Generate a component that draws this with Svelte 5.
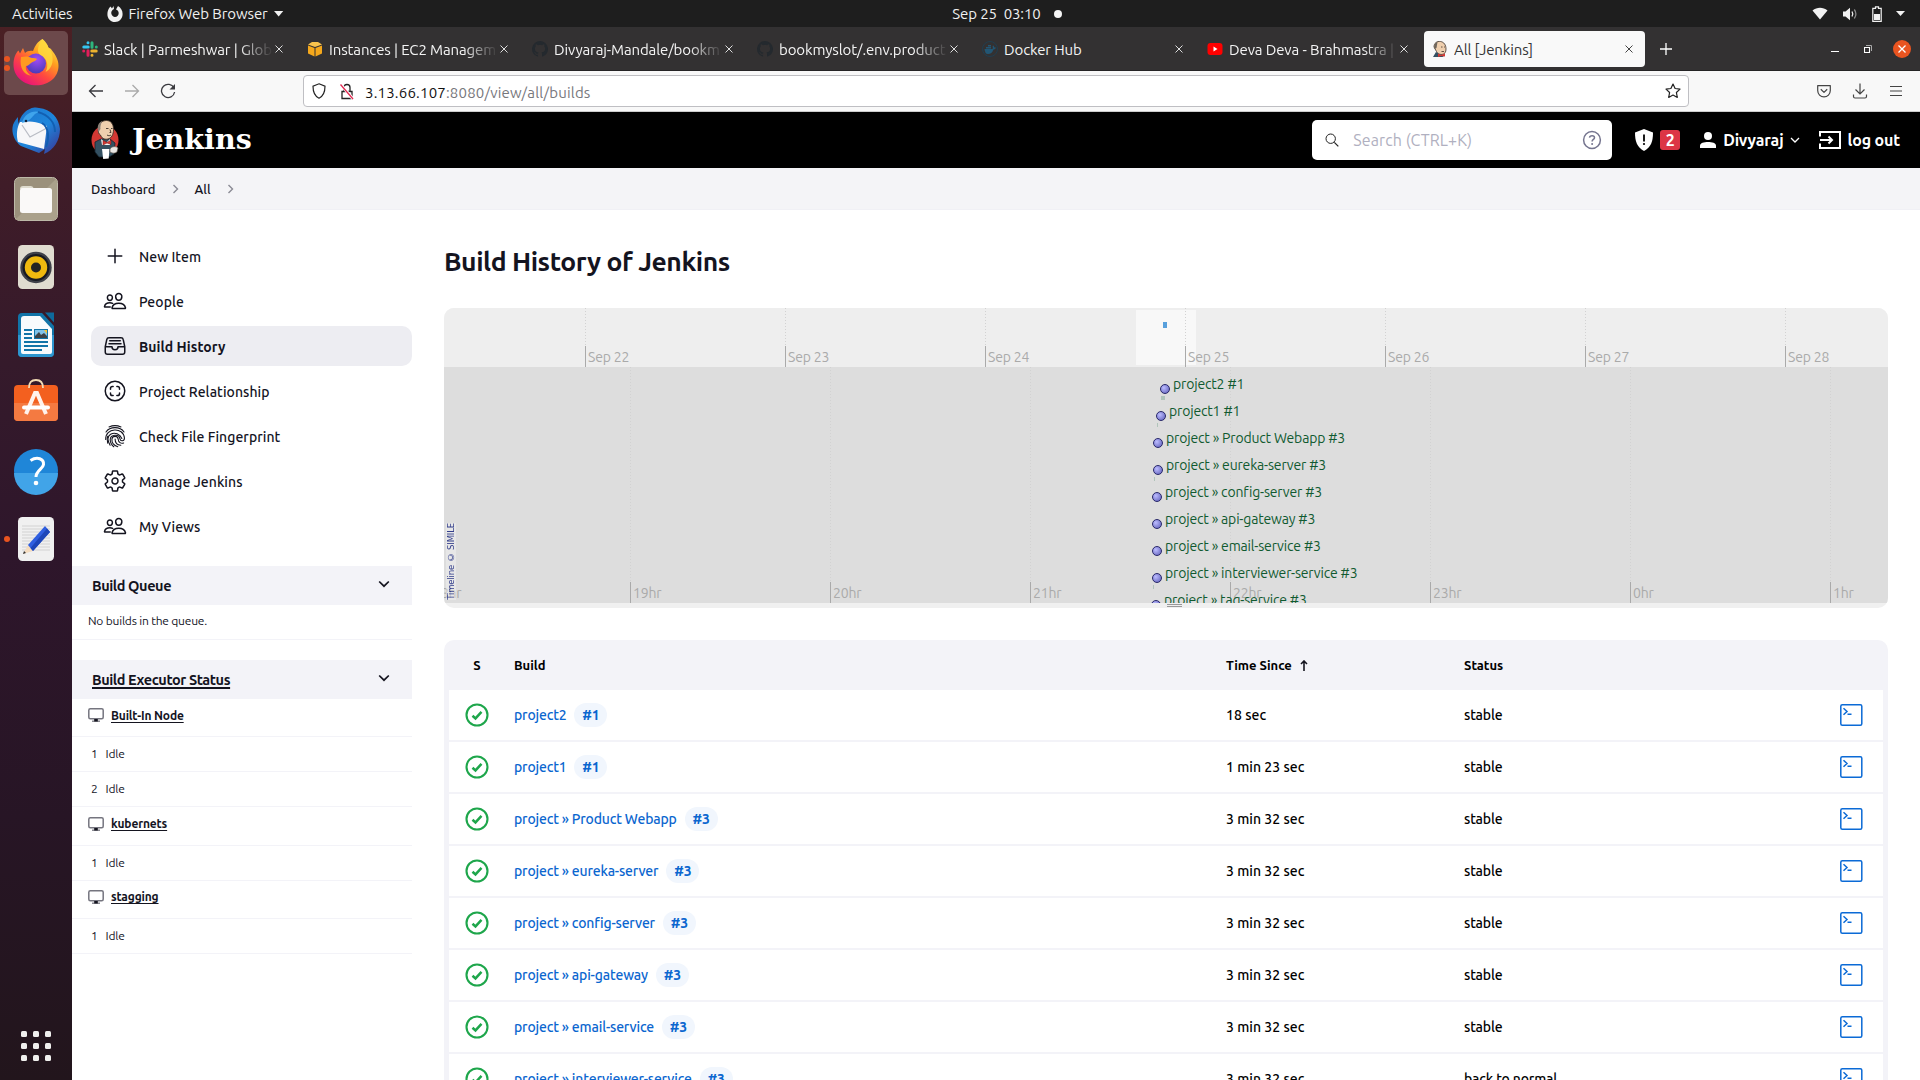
<script>
  const tabs = [
    { title: 'Slack | Parmeshwar | Glob', icon: 'slack' },
    { title: 'Instances | EC2 Managem', icon: 'ec2' },
    { title: 'Divyaraj-Mandale/bookm', icon: 'github' },
    { title: 'bookmyslot/.env.product', icon: 'github' },
    { title: 'Docker Hub', icon: 'docker', plain: true },
    { title: 'Deva Deva - Brahmastra |', icon: 'youtube' },
    { title: 'All [Jenkins]', icon: 'jenkins', active: true, plain: true },
  ];

  const tasks = [
    { label: 'New Item', icon: 'plus' },
    { label: 'People', icon: 'people' },
    { label: 'Build History', icon: 'tray', active: true },
    { label: 'Project Relationship', icon: 'scan' },
    { label: 'Check File Fingerprint', icon: 'finger' },
    { label: 'Manage Jenkins', icon: 'gear' },
    { label: 'My Views', icon: 'people' },
  ];

  const executors = [
    { name: 'Built-In Node', slots: [1, 2] },
    { name: 'kubernets', slots: [1] },
    { name: 'stagging', slots: [1] },
  ];

  const days = ['Sep 22', 'Sep 23', 'Sep 24', 'Sep 25', 'Sep 26', 'Sep 27', 'Sep 28'];
  const hours = ['18hr', '19hr', '20hr', '21hr', '22hr', '23hr', '0hr', '1hr'];

  const events = [
    { name: 'project2 #1', x: 716, tape: 4 },
    { name: 'project1 #1', x: 712, tape: 1 },
    { name: 'project » Product Webapp #3', x: 709, tape: 0 },
    { name: 'project » eureka-server #3', x: 709, tape: 1 },
    { name: 'project » config-server #3', x: 708, tape: 0 },
    { name: 'project » api-gateway #3', x: 708, tape: 0 },
    { name: 'project » email-service #3', x: 708, tape: 0 },
    { name: 'project » interviewer-service #3', x: 708, tape: 1 },
    { name: 'project » tag-service #3', x: 707, tape: 0 },
  ];

  const builds = [
    { name: 'project2', no: '#1', time: '18 sec', status: 'stable' },
    { name: 'project1', no: '#1', time: '1 min 23 sec', status: 'stable' },
    { name: 'project » Product Webapp', no: '#3', time: '3 min 32 sec', status: 'stable' },
    { name: 'project » eureka-server', no: '#3', time: '3 min 32 sec', status: 'stable' },
    { name: 'project » config-server', no: '#3', time: '3 min 32 sec', status: 'stable' },
    { name: 'project » api-gateway', no: '#3', time: '3 min 32 sec', status: 'stable' },
    { name: 'project » email-service', no: '#3', time: '3 min 32 sec', status: 'stable' },
    { name: 'project » interviewer-service', no: '#3', time: '3 min 32 sec', status: 'back to normal' },
  ];
</script>

{#snippet butler()}
  <ellipse cx="14" cy="20" rx="13.5" ry="14.5" fill="#d33833" />
  <path d="M4 22l6-3h9l5 4-1 11-5 3H8l-4-5z" fill="#335061" stroke="#16242d" stroke-width=".8" />
  <path d="M10 19l5 4 4-4v6h-8z" fill="#f4f4f4" />
  <path d="M7.500 8c0-5 4-7.500 8-7.500s7 3 7 9c0 5-2 8.500-5.500 9.500-4 .8-6.500-1-7.500-4-2-1-2.500-3-2-7z" fill="#efcfae" stroke="#3d3129" stroke-width=".9" />
  <path d="M7.500 12c-2-5 0-9.500 3.500-11-1 3-2 6-1.500 8z" fill="#8c8177" />
  <path d="M15 8.500h2.500M20 8.500h1.500M16 15c1.500 1 3 .8 4 0M19 9.500l1 3h-1.500" stroke="#3d3129" stroke-width=".9" fill="none" />
  <path d="M12 20.500l4 2 4-2.500v4.500l-4-1.500-4 2z" fill="#d33833" stroke="#7d1513" stroke-width=".5" />
  <path d="M11 29h7.500l-.8 9.500-5.500.5z" fill="#fff" />
  <path d="M19 29c2-3 6-3 8-1l-1 4c-3 2-5 1-7 0z" fill="#e9e6e2" stroke="#54483d" stroke-width=".6" />
{/snippet}

<div class="desktop">
  <header class="topbar">
    <div class="top-left">
      <span>Activities</span>
      <span class="app-menu">
        <svg width="16" height="18" viewBox="0 0 16 18"><path d="M3.500 1.500L5 3.500 6.500 1 7 4c-2 1-3 2.500-2.700 4.500C4.800 10.800 6.300 12 8 12c2.200 0 3.800-1.700 3.700-4C11.600 6.300 10.500 5 9 4.500L11 1c3 2 4.600 4.500 4.600 8 0 4.700-3.300 8-7.600 8-4.400 0-7.600-3.300-7.600-7.800C.4 6 1.500 3.500 3.500 1.500z" fill="#f2f2f2" /></svg>
        <span>Firefox Web Browser</span>
        <i class="caret"></i>
      </span>
    </div>
    <div class="clock"><span>Sep 25&nbsp; 03:10</span><i class="notice"></i></div>
    <div class="tray">
      <svg width="16" height="14" viewBox="0 0 16 14"><path d="M.5 3.500C5-.3 11-.3 15.500 3.500L8 12.500z" fill="#f2f2f2" /></svg>
      <svg width="16" height="14" viewBox="0 0 16 14"><path d="M1 4.500h2.500L8 .8v12.400L3.500 9.500H1z" fill="#f2f2f2" /><path d="M10 4.500q1.600 2.500 0 5" stroke="#f2f2f2" stroke-width="1.300" fill="none" /><path d="M12.300 2.500q3.200 4.500 0 9" stroke="#888" stroke-width="1.300" fill="none" /></svg>
      <svg width="10" height="16" viewBox="0 0 10 16"><path d="M3.500.8h3v1.500h2.700v13H.8v-13h2.700z" fill="none" stroke="#f2f2f2" stroke-width="1.200" /><path d="M2 8h6v6H2z" fill="#f2f2f2" /></svg>
      <i class="caret"></i>
    </div>
  </header>

  <div class="below">
    <aside class="dock">
      <div class="slot current">
        <svg width="48" height="48" viewBox="0 0 48 48">
          <defs>
            <linearGradient id="ff" x1="1" y1="0" x2=".3" y2="1"><stop offset=".1" stop-color="#fff14f" /><stop offset=".4" stop-color="#ffa01f" /><stop offset=".68" stop-color="#ff4a3f" /><stop offset="1" stop-color="#e8127a" /></linearGradient>
            <radialGradient id="fp" cx=".55" cy=".3" r=".7"><stop offset="0" stop-color="#a04bf5" /><stop offset="1" stop-color="#4b3bb8" /></radialGradient>
          </defs>
          <path d="M30.500 0c3 2.500 5.500 5.500 6 9 1.500-.3 2.500.5 3.500 2.500 3 3.500 6.500 9 6.500 15.500 0 11-9.500 19.300-22 19.300S1.500 37.800 1.500 25.500c0-6 2-11.500 5-14l1.500 3 3-5.500 2 5c2-2 5-2.500 8-2 3-7 4.500-9 9.500-12z" fill="url(#ff)" />
          <circle cx="24" cy="24.500" r="10" fill="url(#fp)" />
          <path d="M9 18c5-1 8-.5 11 1 2 0 4 0 5 1-1 2-4 2.500-6 4-1.500 1-3 3-5 3-1 4 2 8 6 10-8-1-13-8-11-19z" fill="#ff9a20" />
          <path d="M30.500 0c3 5 9 10 10 18 1 8-3 13-7 15 4-7 1-14-5-17-4-2-3-10 2-16z" fill="#ffd83d" opacity=".85" />
        </svg>
        <i class="dot upper"></i><i class="dot lower"></i>
      </div>
      <div class="slot">
        <svg width="48" height="48" viewBox="0 0 48 48">
          <defs><linearGradient id="tb" x1="0" y1="0" x2="1" y2="1"><stop offset="0" stop-color="#1d73c9" /><stop offset=".55" stop-color="#1e86dc" /><stop offset="1" stop-color="#3c3190" /></linearGradient></defs>
          <path d="M12 6C18 0 24 0 27 1c12 1 20 10 21 21 0 11-6 21-16 25l1-5-6 4-18-7C2 34-1 25 1 18c1-3 3-6 5-8 0 3 0 5 1 7 0-4 2-8 5-11z" fill="url(#tb)" />
          <path d="M8 15c7 0 13-2 24 3l3 1-3 23-26-7C4 28 5 20 8 15z" fill="#f7f7f9" />
          <path d="M10 18l8 12 17-9" fill="none" stroke="#b9bcc4" stroke-width="1.200" />
          <path d="M10 16c2-9 10-13 18-11-8 1-7 9-18 11z" fill="#3fa4ec" />
          <path d="M26 5c10 3 17 10 17 20M30 16c6 4 8 13 4 24" fill="none" stroke="#125fb2" stroke-width="2" />
          <circle cx="14" cy="14" r="1.300" fill="#12233e" />
        </svg>
      </div>
      <div class="slot">
        <svg width="48" height="48" viewBox="0 0 48 48">
          <rect x="2.500" y="2.500" width="43" height="43" rx="5" fill="#9b917c" stroke="#bdb9a8" />
          <path d="M3 45L44 4q1 1 1 4v33q0 4-4 4z" fill="#aaa18b" />
          <path d="M8 14q0-3 3-3h8q2 0 3 3z" fill="#dfdccf" />
          <rect x="8" y="13" width="32" height="25" rx="2.500" fill="#faf9f8" />
        </svg>
      </div>
      <div class="slot">
        <svg width="48" height="48" viewBox="0 0 48 48">
          <rect x="6" y="2" width="36" height="44" rx="4.500" fill="#e0dcd0" />
          <circle cx="24" cy="24.500" r="15.700" fill="#3f4149" /><circle cx="24" cy="24.500" r="13.500" fill="#181a22" />
          <circle cx="24" cy="24.500" r="11.200" fill="#efb90f" /><circle cx="24" cy="24.500" r="5" fill="#242424" />
        </svg>
      </div>
      <div class="slot">
        <svg width="48" height="48" viewBox="0 0 48 48">
          <path d="M10 2h20l12 13v27q0 4-4 4H10q-4 0-4-4V6q0-4 4-4z" fill="#1174a8" />
          <path d="M6 24h36v18q0 4-4 4H10q-4 0-4-4z" fill="#2d96cf" />
          <path d="M12 5h16l12 13v23q0 2-2 2H11q-2 0-2-2V8q0-3 3-3z" fill="#f8fbfd" />
          <path d="M33 1.500h9v10z" fill="#0e6a9c" />
          <path d="M12 19h8M12 23h8M12 27h8M12 31h24M12 35h24M12 39h18" stroke="#1174a8" stroke-width="1.800" />
          <rect x="22" y="18" width="14" height="10" fill="#1174a8" /><rect x="23" y="19" width="12" height="8" fill="#80c3ea" />
          <path d="M23 27v-2l4-4 2 3 3-2 3 3v2z" fill="#3c4247" /><path d="M32 19h3v4z" fill="#f3c33b" />
        </svg>
      </div>
      <div class="slot">
        <svg width="48" height="48" viewBox="0 1 48 48">
          <rect x="2" y="7" width="44" height="36" rx="4" fill="#f3601f" />
          <path d="M2 25h44v14q0 4-4 4H6q-4 0-4-4z" fill="#f47a41" />
          <path d="M17 10q0-8 7-8t7 8" stroke="#f3dcb5" stroke-width="1.800" fill="none" />
          <path d="M14 36l9-21h2l9 21" fill="none" stroke="#fff3ec" stroke-width="4" /><path d="M12 29.500h24" stroke="#fff" stroke-width="4" stroke-linecap="round" />
        </svg>
      </div>
      <div class="slot">
        <svg width="48" height="48" viewBox="0 0 48 48">
          <circle cx="24" cy="24" r="22" fill="#1f86d8" /><path d="M2 26h44a22 22 0 0 1-44 0z" fill="#41a4e8" />
          <path d="M18.500 13.500c7-4.500 13.500-1.500 13 4-.5 4.500-7.500 6-7.500 12.500" fill="none" stroke="#fff" stroke-width="3" /><circle cx="24" cy="36" r="2.300" fill="#fff" />
        </svg>
      </div>
      <div class="slot">
        <svg width="48" height="48" viewBox="0 0 48 48">
          <rect x="6" y="2" width="36" height="44" rx="4.500" fill="#f0f0f0" />
          <path d="M10 11h28M10 14h28M10 17h28M10 20h28M10 23h28M10 26h28M10 29h28M10 32h28M10 35h28" stroke="#d2d2d2" />
          <path d="M16 30l5 6-10 3z" fill="#f4dcc0" /><path d="M11 39l1-3 2 2z" fill="#333" />
          <path d="M33 11l5 6-17 19-5-6z" fill="#2f5fe0" /><path d="M35 13.500l3 3.500-17 19-2.500-3z" fill="#1d46b8" />
        </svg>
        <i class="dot"></i>
      </div>
      <div class="apps">{#each Array(9) as _}<i></i>{/each}</div>
    </aside>

    <div class="browser">
      <div class="tabstrip">
        {#each tabs as tab}
          <div class="tab" class:active={tab.active}>
            <svg width="16" height="16" viewBox="0 0 16 16">
              {#if tab.icon === 'slack'}
                <g stroke-width="3" stroke-linecap="round" fill="none">
                  <path d="M1.800 6h4.400M6 1.700v0" stroke="#36c5f0" /><path d="M10 1.800v4.400M14.300 6v0" stroke="#2eb67d" />
                  <path d="M9.800 10h4.400M10 14.300v0" stroke="#ecb22e" /><path d="M6 9.800v4.400M1.700 10v0" stroke="#e01e5a" />
                </g>
              {:else if tab.icon === 'ec2'}
                <path d="M1 3.500L5 1h6l4 2.500L8 6z" fill="#f9c34d" /><path d="M1 4.500L7.500 7v8.500L1 12.500zM15 4.500L8.500 7v8.500l6.500-3z" fill="#f5a81c" />
              {:else if tab.icon === 'github'}
                <path d="M8 0a8 8 0 0 0-2.530 15.590c.4.070.55-.17.55-.38v-1.490c-2.230.49-2.700-.95-2.700-.95-.36-.92-.89-1.170-.89-1.170-.73-.5.060-.49.060-.49.800.060 1.230.83 1.230.83.72 1.230 1.870.87 2.330.67.070-.52.280-.87.510-1.070-1.780-.2-3.640-.89-3.640-3.950 0-.87.310-1.590.82-2.150-.08-.2-.36-1.020.08-2.120 0 0 .67-.21 2.200.82a7.700 7.700 0 0 1 4 0c1.530-1.040 2.200-.82 2.200-.82.44 1.100.16 1.920.08 2.120.51.560.82 1.270.82 2.150 0 3.070-1.870 3.750-3.650 3.950.29.250.54.730.54 1.480v2.190c0 .21.150.46.550.38A8 8 0 0 0 8 0z" fill="#24292e" />
              {:else if tab.icon === 'docker'}
                <circle cx="8" cy="8" r="7.500" fill="none" stroke="#203e50" /><path d="M2.500 8h8c.5-1 .4-2 0-3l1-.5 1 2h1.500c-.5 1.500-1.500 2-2.500 2-1 3-3 4.500-5.500 4.500S3 11 2.500 8zM4 6h5v1.500H4zM6 4h3v1.500H6z" fill="#225674" />
              {:else if tab.icon === 'youtube'}
                <rect x=".5" y="2" width="15" height="12" rx="3" fill="#f00" /><path d="M6.500 5.500v5l4-2.500z" fill="#fff" />
              {:else}
                <path d="M2 6c0-4 3-6 6.500-5.500S14 4 14 8c0 3-1 5-4 5.500-3 0-5-1-5.500-3z" fill="#efcfae" stroke="#3d3129" stroke-width=".8" /><path d="M2.500 8C1.500 4 3 1.500 5.500 1L4.500 7z" fill="#6f665c" /><path d="M9 6h1.500M12 6h1M9.500 10.500h2.500" stroke="#3d3129" stroke-width=".8" /><path d="M1 16l3-5 5 3 3 2z" fill="#335061" /><path d="M6 12.500l3 1.500 4-1.500v3l-4-.5-3 1z" fill="#d33833" />
              {/if}
            </svg>
            <span class="tab-title" class:plain={tab.plain}>{tab.title}</span>
            <svg class="close" width="8" height="8" viewBox="0 0 8 8"><path d="M.5.5l7 7M7.500.5l-7 7" stroke="currentColor" /></svg>
          </div>
        {/each}
        <svg class="newtab" width="12" height="12" viewBox="0 0 12 12"><path d="M6 0v12M0 6h12" stroke="#fff" stroke-width="1.300" /></svg>
        <div class="winctl">
          <svg width="8" height="8" viewBox="0 0 8 8"><path d="M0 6.500h8" stroke="#fff" /></svg>
          <svg width="8" height="8" viewBox="0 0 8 8"><path d="M.5 2.500h5v5h-5z" stroke="#fff" fill="none" stroke-width="1.100" /><path d="M2 .5h5.500V6" stroke="#aaa" fill="none" /></svg>
          <svg width="18" height="18" viewBox="0 0 18 18"><circle cx="9" cy="9" r="9" fill="#e95420" /><path d="M5.500 5.500l7 7M12.500 5.500l-7 7" stroke="#fff" stroke-width="1.300" /></svg>
        </div>
      </div>

      <div class="toolbar">
        <div class="nav">
          <svg width="16" height="16" viewBox="0 0 16 16"><path d="M15 8H1.500M7.500 2L1.500 8l6 6" fill="none" stroke="#3a3a3f" stroke-width="1.300" /></svg>
          <svg width="16" height="16" viewBox="0 0 16 16"><path d="M1 8h13.500M8.500 2l6 6-6 6" fill="none" stroke="#aaa" stroke-width="1.300" /></svg>
          <svg width="16" height="16" viewBox="0 0 16 16"><path d="M14 5A6.600 6.600 0 1 0 14.600 9" fill="none" stroke="#3a3a3f" stroke-width="1.300" /><path d="M15 1v5.500H9.500z" fill="#3a3a3f" /></svg>
        </div>
        <div class="urlbar">
          <svg width="14" height="16" viewBox="0 0 14 16"><path d="M7 .8l6 2.400c0 6-1.500 9.800-6 12C2.500 13 1 9.200 1 3.200z" fill="none" stroke="#222" stroke-width="1.200" /></svg>
          <svg class="lock" width="14" height="17" viewBox="0 0 14 17"><path d="M2 8.500h10v7H2zM4 8V4.500a3 3 0 0 1 6 0V8" fill="none" stroke="#222" stroke-width="1.300" /><path d="M.5 1L13 16" stroke="#fff" stroke-width="3" /><path d="M.5 1.500L13 16" stroke="#e22850" stroke-width="1.300" /></svg>
          <span class="url"><b>3.13.66.107</b>:8080/view/all/builds</span>
          <svg class="star" width="16" height="16" viewBox="0 0 16 16"><path d="M8 1l2.100 4.500 4.900.6-3.600 3.400.9 4.900L8 12l-4.300 2.400.9-4.900L1 6.100l4.900-.6z" fill="none" stroke="#222" stroke-width="1.200" stroke-linejoin="round" /></svg>
        </div>
        <div class="tools">
          <svg width="16" height="16" viewBox="0 0 16 16"><path d="M1.700 2.600h12.600v5a6.300 6.300 0 0 1-12.600 0zM4.800 6.300L8 9.400l3.200-3.100" fill="none" stroke="#444" stroke-width="1.200" stroke-linejoin="round" /></svg>
          <svg width="16" height="16" viewBox="0 0 16 16"><path d="M8 .5v10M3.500 6.500L8 11l4.500-4.500M1.500 11.500v2q0 1.500 1.500 1.500h10q1.500 0 1.500-1.500v-2" fill="none" stroke="#444" stroke-width="1.200" /></svg>
          <svg width="16" height="16" viewBox="0 0 16 16"><path d="M2 3.500h12M2 8h12M2 12.500h12" stroke="#444" stroke-width="1.200" /></svg>
        </div>
      </div>

      <div class="jenkins-head">
        <svg class="mascot" width="28" height="40" viewBox="0 0 28 40">{@render butler()}</svg>
        <span class="brand">Jenkins</span>
        <div class="search">
          <svg width="16" height="16" viewBox="0 0 16 16"><circle cx="6.700" cy="6.700" r="4.700" fill="none" stroke="#222" stroke-width="1" /><path d="M10.300 10.300l4 4" stroke="#222" stroke-width="1.200" /></svg>
          <span>Search (CTRL+K)</span>
          <svg class="help" width="20" height="20" viewBox="0 0 20 20"><circle cx="10" cy="10" r="8.400" fill="none" stroke="#75758f" stroke-width="1.500" /><path d="M7.500 7.700c.3-2.700 5-2.700 5 0 0 1.700-2.400 1.800-2.400 3.800" fill="none" stroke="#75758f" stroke-width="1.500" /><circle cx="10.100" cy="14" r="1" fill="#75758f" /></svg>
        </div>
        <svg class="shield" width="18" height="22" viewBox="0 0 18 22"><path d="M9 0l9 3.500c0 9-2 14.500-9 18.500C2 18 0 12.500 0 3.500z" fill="#fff" /><path d="M9 5.500v7" stroke="#000" stroke-width="1.800" /><circle cx="9" cy="15" r="1.100" /></svg>
        <span class="alerts">2</span>
        <svg class="user" width="16" height="16" viewBox="0 0 16 16"><circle cx="8" cy="4" r="4" fill="#fff" /><path d="M0 16v-2.500C0 11 4 10 8 10s8 1 8 3.500V16z" fill="#fff" /></svg>
        <span class="who">Divyaraj</span>
        <svg class="down" width="10" height="7" viewBox="0 0 10 7"><path d="M1 1l4 4 4-4" fill="none" stroke="#fff" stroke-width="1.300" /></svg>
        <svg class="exit" width="22" height="18" viewBox="0 0 22 18"><path d="M1 5.500V1h20v16H1v-4.500M1 9h12M9.500 5.500L13 9l-3.500 3.500" fill="none" stroke="#fff" stroke-width="2" /></svg>
        <span class="who">log out</span>
      </div>

      <nav class="crumbs">
        <span>Dashboard</span>
        <svg width="7" height="10" viewBox="0 0 7 10"><path d="M1.500 1l4 4-4 4" fill="none" stroke="#8a8a95" stroke-width="1.400" /></svg>
        <span>All</span>
        <svg width="7" height="10" viewBox="0 0 7 10"><path d="M1.500 1l4 4-4 4" fill="none" stroke="#8a8a95" stroke-width="1.400" /></svg>
      </nav>

      <div class="page">
        <aside class="side">
          <div class="tasks">
            {#each tasks as task}
              <div class="task" class:active={task.active}>
                <svg width="24" height="24" viewBox="0 0 512 512">
                  {#if task.icon === 'plus'}
                    <path d="M256 112v288M400 256H112" />
                  {:else if task.icon === 'people'}
                    <path d="M402 168c-2.930 40.670-33.100 72-66 72s-63.120-31.320-66-72c-3-42.310 26.370-72 66-72s69 30.460 66 72zM336 304c-65.170 0-127.840 32.370-143.540 95.410-2.080 8.340 3.150 16.590 11.720 16.590h263.650c8.570 0 13.770-8.250 11.720-16.590C463.850 335.360 401.180 304 336 304zM200 185.940c-2.340 32.480-26.720 58.060-53 58.060s-50.700-25.570-53-58.060C91.610 152.150 115.340 128 147 128s55.390 24.770 53 57.940zM206 306c-18.050-8.270-37.930-11.450-59-11.450-52 0-102.100 25.850-114.650 76.200-1.650 6.660 2.530 13.250 9.370 13.250H154" />
                  {:else if task.icon === 'tray'}
                    <path d="M384 80H128c-26 0-43 14-48 40L48 272v112a48 48 0 0 0 48 48h320a48 48 0 0 0 48-48V272l-32-152c-5-27-23-40-48-40zM48 272h144M320 272h144M192 272a64 64 0 0 0 128 0M144 144h224M128 208h256" />
                  {:else if task.icon === 'scan'}
                    <circle cx="256" cy="256" r="208" /><path d="M296 352h16a40 40 0 0 0 40-40v-16M352 216v-16a40 40 0 0 0-40-40h-16M216 160h-16a40 40 0 0 0-40 40v16M160 296v16a40 40 0 0 0 40 40h16" />
                  {:else if task.icon === 'finger'}
                    <g class="ridges">
                      <path d="M128 62c84-36 172-36 256 0" />
                      <path d="M64 170c84-124 300-124 384 0" />
                      <path d="M58 330c-16-250 380-280 400-30 2 70-84 80-96 16-14-110-200-100-208 10-4 60 30 120 76 160" />
                      <path d="M100 410c-14-50-18-100 0-150" />
                      <path d="M152 452c-50-90-64-190 10-234 90-50 200-10 240 90" />
                      <path d="M316 484c-90-30-130-100-126-160 6-80 126-80 134 0 6 70 60 100 116 82" />
                      <path d="M258 320c0 80 50 130 122 134" />
                    </g>
                  {:else}
                    <path d="M262.290 192.310a64 64 0 1 0 57.400 57.400 64.130 64.130 0 0 0-57.400-57.400zM416.390 256a154.340 154.340 0 0 1-1.530 20.790l45.210 35.460a10.810 10.810 0 0 1 2.450 13.750l-42.770 74a10.810 10.810 0 0 1-13.140 4.590l-44.900-18.080a16.110 16.110 0 0 0-15.170 1.750A164.480 164.480 0 0 1 325 400.800a15.940 15.940 0 0 0-8.820 12.140l-6.730 47.890a11.080 11.080 0 0 1-10.680 9.170h-85.540a11.110 11.110 0 0 1-10.690-8.870l-6.720-47.820a16.070 16.070 0 0 0-9-12.220 155.300 155.300 0 0 1-21.460-12.570 16 16 0 0 0-15.110-1.710l-44.890 18.070a10.810 10.810 0 0 1-13.140-4.580l-42.770-74a10.800 10.800 0 0 1 2.450-13.750l38.210-30a16.050 16.050 0 0 0 6-14.080c-.36-4.170-.58-8.330-.58-12.500s.21-8.270.58-12.350a16 16 0 0 0-6.070-13.940l-38.190-30A10.810 10.810 0 0 1 49.480 186l42.770-74a10.810 10.810 0 0 1 13.140-4.590l44.900 18.080a16.110 16.110 0 0 0 15.170-1.750A164.480 164.480 0 0 1 187 111.200a15.940 15.940 0 0 0 8.820-12.140l6.730-47.890A11.080 11.080 0 0 1 213.230 42h85.540a11.110 11.110 0 0 1 10.690 8.870l6.720 47.820a16.070 16.070 0 0 0 9 12.220 155.300 155.300 0 0 1 21.460 12.570 16 16 0 0 0 15.110 1.710l44.890-18.070a10.810 10.810 0 0 1 13.140 4.580l42.770 74a10.800 10.800 0 0 1-2.450 13.750l-38.210 30a16.050 16.050 0 0 0-6.050 14.080c.33 4.140.55 8.300.55 12.470z" />
                  {/if}
                </svg>
                <span>{task.label}</span>
              </div>
            {/each}
          </div>

          <div class="pane-head"><span>Build Queue</span><svg width="12" height="8" viewBox="0 0 12 8"><path d="M1.200 1.500L6 6.200l4.800-4.700" fill="none" stroke="#14141f" stroke-width="1.700" /></svg></div>
          <div class="queue">No builds in the queue.</div>
          <div class="pane-head"><span class="linked">Build Executor Status</span><svg width="12" height="8" viewBox="0 0 12 8"><path d="M1.200 1.500L6 6.200l4.800-4.700" fill="none" stroke="#14141f" stroke-width="1.700" /></svg></div>
          {#each executors as node}
            <div class="node">
              <svg width="16" height="14" viewBox="0 0 16 14"><rect x=".8" y=".8" width="14.400" height="10" rx="1.500" fill="none" stroke="#75757f" stroke-width="1.500" /><path d="M4 13.200h8" stroke="#75757f" stroke-width="1.300" /><path d="M6.200 11h3.600v2.500H6.200z" fill="#14141f" /></svg>
              <span>{node.name}</span>
            </div>
            {#each node.slots as slot}
              <div class="idle"><span>{slot}</span><span>Idle</span></div>
            {/each}
          {/each}
        </aside>

        <main>
          <h1>Build History of Jenkins</h1>

          <div class="timeline">
            <div class="band daily">
              <div class="window"></div>
              {#each days as day}<div class="tick"><span>{day}</span></div>{/each}
              <div class="mark"></div>
            </div>
            <div class="band hourly">
              {#each hours as hour}<div class="tick"><span>{hour}</span></div>{/each}
              {#each events as ev, i}
                <div class="event" style:left="{ev.x}px" style:top="{i * 27 + 6}px">
                  <i class="ball"></i><span>{ev.name}</span>
                  {#if ev.tape}<i class="tape" style:width="{ev.tape}px"></i>{/if}
                </div>
              {/each}
              <span class="credit">Timeline © SIMILE</span>
            </div>
            <div class="grip"><i></i><i></i></div>
          </div>

          <div class="table">
            <div class="row head">
              <span class="s">S</span><span>Build</span><span>Time Since <svg width="8" height="11" viewBox="0 0 8 11"><path d="M4 11V1M1 4l3-3 3 3" fill="none" stroke="#14141f" stroke-width="1.600" /></svg></span><span>Status</span><span></span>
            </div>
            {#each builds as b}
              <div class="row">
                <span class="s"><svg width="24" height="24" viewBox="0 0 24 24"><circle cx="12" cy="12" r="10.500" fill="none" stroke="#1ea64b" stroke-width="2.100" /><path d="M7.500 12.700l3 2.700 6-6.500" fill="none" stroke="#1ea64b" stroke-width="2.500" /></svg></span>
                <span class="build"><span class="job">{b.name}</span><span class="num">{b.no}</span></span>
                <span class="time">{b.time}</span>
                <span>{b.status}</span>
                <span><svg width="24" height="24" viewBox="0 0 24 24"><rect x="1.800" y="1.800" width="21" height="20.400" rx="1.500" fill="none" stroke="#0b6ad6" stroke-width="1.500" /><path d="M4.500 5.200l3.500 3.300-3.500 3.300M8.500 11.300h4" fill="none" stroke="#0b6ad6" stroke-width="1.500" /></svg></span>
              </div>
            {/each}
          </div>
        </main>
      </div>
    </div>
  </div>
</div>

<style>
  :global(body) { margin: 0; overflow: hidden; }
  * { box-sizing: border-box; }
  svg { display: block; flex: none; }
  i { display: block; flex: none; }
  .desktop { width: 1920px; height: 1080px; overflow: hidden; display: flex; flex-direction: column; font-family: Ubuntu, 'Noto Sans', sans-serif; font-size: 14px; letter-spacing: -0.17px; white-space: nowrap; color: #14141f; background: #fff; }

  .topbar { height: 27px; flex: none; background: #1e1e1e; color: #f0f0f0; display: grid; grid-template-columns: 1fr auto 1fr; align-items: center; font-size: 15px; letter-spacing: -0.1px; line-height: 20px; }
  .topbar span { padding-top: 1px; }
  .top-left { display: flex; padding-left: 12px; gap: 34px; }
  .app-menu { display: flex; align-items: center; gap: 6px; }
  .topbar .app-menu { padding: 0; }
  .caret { width: 10px; height: 6px; background: #f2f2f2; clip-path: polygon(0 0, 100% 0, 50% 100%); }
  .clock { display: flex; align-items: center; gap: 13px; padding-left: 94px; }
  .notice { width: 8px; height: 8px; border-radius: 50%; background: #f5f5f5; }
  .tray { display: flex; justify-content: flex-end; align-items: center; gap: 14px; padding-right: 15px; }
  .tray .caret { width: 9px; height: 5px; }

  .below { flex: 1; display: flex; min-height: 0; }
  .dock { width: 72px; flex: none; display: flex; flex-direction: column; align-items: center; gap: 4px; padding-top: 4px; background: linear-gradient(#4a2024, #3f1c28 15%, #351a2b 32%, #2e162b 50%, #271525 75%, #22151c); }
  .slot { position: relative; width: 64px; height: 64px; border-radius: 5px; display: flex; align-items: center; justify-content: center; }
  .current { background: #6c494b; }
  .dot { position: absolute; left: 0; top: 29px; width: 6px; height: 6px; border-radius: 50%; background: #e95420; }
  .upper { top: 25px; }
  .lower { top: 34px; }
  .apps { margin-top: auto; margin-bottom: 19px; display: grid; grid-template-columns: repeat(3, 6px); gap: 6px; }
  .apps i { width: 6px; height: 6px; border-radius: 1.500px; background: #f0f0ee; }

  .browser { flex: 1; display: flex; flex-direction: column; min-width: 0; }
  .tabstrip { height: 44px; flex: none; display: flex; align-items: center; background: #333132; border-bottom: 1px solid #252425; color: #f4f4f4; font-size: 15px; letter-spacing: -0.12px; }
  .tab { width: 221px; height: 36px; margin: 0 2px; border-radius: 4px; display: flex; align-items: center; padding: 0 12px 0 8px; gap: 6px; }
  .tab.active { background: #f9f9f9; color: #333; }
  .tab-title { flex: 1; min-width: 0; overflow: hidden; padding-top: 1px; mask-image: linear-gradient(90deg, #000 calc(100% - 34px), transparent); }
  .plain { mask-image: none; }
  .close { margin-left: -4px; color: #ddd; }
  .active .close { color: #444; }
  .newtab { margin-left: 13px; }
  .winctl { margin-left: auto; display: flex; align-items: center; gap: 25px; padding-right: 9px; }
  .winctl svg:last-child { margin-left: -4px; }

  .toolbar { height: 41px; flex: none; display: flex; align-items: center; background: #f8f8f8; border-bottom: 1px solid #ccc; }
  .nav { display: flex; gap: 20px; padding-left: 16px; width: 231px; }
  .urlbar { width: 1386px; height: 32px; border: 1px solid #bfbfc3; border-radius: 4px; background: #fff; display: flex; align-items: center; padding: 0 7px 0 8px; font-size: 15px; color: #77777c; }
  .lock { margin-left: 14px; }
  .url { margin-left: 11px; padding-top: 2px; letter-spacing: 0.2px; }
  .url b { font-weight: 400; color: #111; }
  .star { margin-left: auto; }
  .tools { margin-left: auto; display: flex; gap: 20px; padding-right: 16px; }

  .jenkins-head { height: 56px; flex: none; background: #000; color: #fff; display: flex; align-items: center; padding: 0 20px 0 19px; }
  .brand { margin-left: 13px; padding-bottom: 3px; font: bold 28.500px 'DejaVu Serif', serif; letter-spacing: 0; }
  .search { margin-left: auto; width: 300px; height: 40px; border-radius: 5px; background: #fff; display: flex; align-items: center; padding: 0 10px 0 12px; color: #b0b0c0; font-size: 16px; letter-spacing: 0.1px; }
  .search span { margin-left: 13px; }
  .help { margin-left: auto; }
  .shield { margin-left: 23px; }
  .alerts { margin-left: 7px; width: 20px; height: 20px; border-radius: 3px; background: #dc3545; font-size: 16px; font-weight: 700; line-height: 20px; text-align: center; }
  .user { margin-left: 20px; }
  .who { font-size: 16px; font-weight: 600; letter-spacing: -0.17px; margin-left: 7px; }
  .down { margin-left: 6px; }
  .exit { margin-left: 19px; }

  .crumbs { height: 42px; flex: none; background: #f4f4f7; display: flex; align-items: center; padding-left: 19px; gap: 16px; font-size: 13px; font-weight: 500; letter-spacing: 0; border-bottom: 1px solid #f0f0f5; }

  .page { flex: 1; display: flex; min-height: 0; }
  .side { width: 340px; flex: none; padding-top: 26px; }
  .tasks { display: flex; flex-direction: column; gap: 5px; padding-left: 19px; margin-bottom: 20px; }
  .task { height: 40px; border-radius: 10px; display: flex; align-items: center; gap: 12px; padding-left: 12px; font-weight: 500; letter-spacing: 0.05px; }
  .task span { padding-top: 2px; }
  .task svg { fill: none; stroke: #14141f; stroke-width: 32; stroke-linecap: round; stroke-linejoin: round; }
  .ridges { stroke-width: 23; }
  .task.active { background: #ededf2; font-weight: 600; }
  .pane-head { height: 39px; background: #f3f3f8; display: flex; align-items: center; justify-content: space-between; padding: 0 22px 0 20px; font-size: 14.500px; font-weight: 600; letter-spacing: -0.42px; }
  .pane-head svg { margin-top: -3px; }
  .linked { text-decoration: underline; text-decoration-thickness: 2px; text-underline-offset: 2px; }
  .queue { height: 35px; line-height: 32px; margin-bottom: 20px; padding-left: 16px; font-size: 12px; letter-spacing: -0.2px; border-bottom: 1px solid #f3f3f8; }
  .node { height: 38.400px; display: flex; align-items: center; padding: 0 0 5px 16px; gap: 7px; font-size: 12px; font-weight: 600; letter-spacing: -0.15px; border-bottom: 1px solid #f3f3f8; }
  .node span { text-decoration: underline; text-underline-offset: 2px; }
  .idle { height: 35px; display: flex; align-items: center; padding: 0 0 1px 19px; gap: 8px; font-size: 12px; border-bottom: 1px solid #f3f3f8; }

  main { width: 1444px; margin-left: 32px; display: flex; flex-direction: column; }
  h1 { margin: 31px 0 27px; height: 40px; line-height: 40px; font-size: 26.500px; font-weight: 600; letter-spacing: -0.45px; }

  .timeline { height: 300px; flex: none; border-radius: 10px; overflow: hidden; background: #f0f0f0; display: flex; flex-direction: column; font-size: 14px; }
  .band { position: relative; display: flex; overflow: hidden; flex: none; }
  .daily { height: 59px; background: #eee; padding-left: 141px; }
  .hourly { height: 236px; background: #ddd; }
  .hourly .tick:first-child { margin-left: -14px; }
  .tick { position: relative; width: 200px; flex: none; display: flex; align-items: flex-end; color: #aaa; background: repeating-linear-gradient(#d2d2d2 0 1px, transparent 1px 3px) 0 0 / 1px 100% no-repeat; }
  .tick span { height: 21px; line-height: 22px; padding-left: 2px; border-left: 1px solid #aaa; }
  .window { position: absolute; left: 692px; top: 2px; width: 60px; height: 55px; background: #f8f8f8; }
  .mark { position: absolute; left: 719px; top: 14px; width: 4px; height: 6px; background: #58a0dc; }
  .event { position: absolute; display: flex; gap: 3px; color: #105a30; line-height: 23px; }
  .ball { width: 10px; height: 10px; margin-top: 11px; border-radius: 50%; border: 1px solid #28286a; background: radial-gradient(circle at 35% 35%, #bcbcff, #5c5cb8); }
  .tape { position: absolute; left: 1px; top: 23px; height: 4px; background: #b0c4ba; }
  .credit { position: absolute; left: 2px; bottom: 3px; writing-mode: vertical-rl; transform: rotate(180deg); font: 8.500px/10px 'DejaVu Sans', sans-serif; color: #35408c; letter-spacing: -0.15px; background: rgb(255 255 255 / 0.3); }
  .grip { display: flex; flex-direction: column; align-items: center; gap: 1px; padding-top: 1px; }
  .grip i { width: 15px; height: 1px; background: #999; margin-left: 16px; }

  .table { flex: none; margin-top: 32px; background: #f3f3f8; border-radius: 10px 10px 0 0; padding: 0 5px; display: flex; flex-direction: column; gap: 2px; }
  .row { height: 50px; background: #fff; display: grid; grid-template-columns: 65px 712px 238px 375px 1fr; align-items: center; font-weight: 500; color: #000; }
  .row.head { background: none; font-size: 13px; font-weight: 600; letter-spacing: 0; margin-bottom: -2px; }
  .head svg { display: inline-block; margin-left: 5px; vertical-align: -1px; }
  .time { letter-spacing: 0.03px; }
  .s { display: flex; justify-content: center; padding-right: 9px; }
  .build { display: flex; align-items: center; gap: 8px; color: #0b66cf; }
  .num { width: 33px; height: 24px; line-height: 24px; border-radius: 12px; background: #f1f6fd; text-align: center; font-weight: 600; }
</style>
